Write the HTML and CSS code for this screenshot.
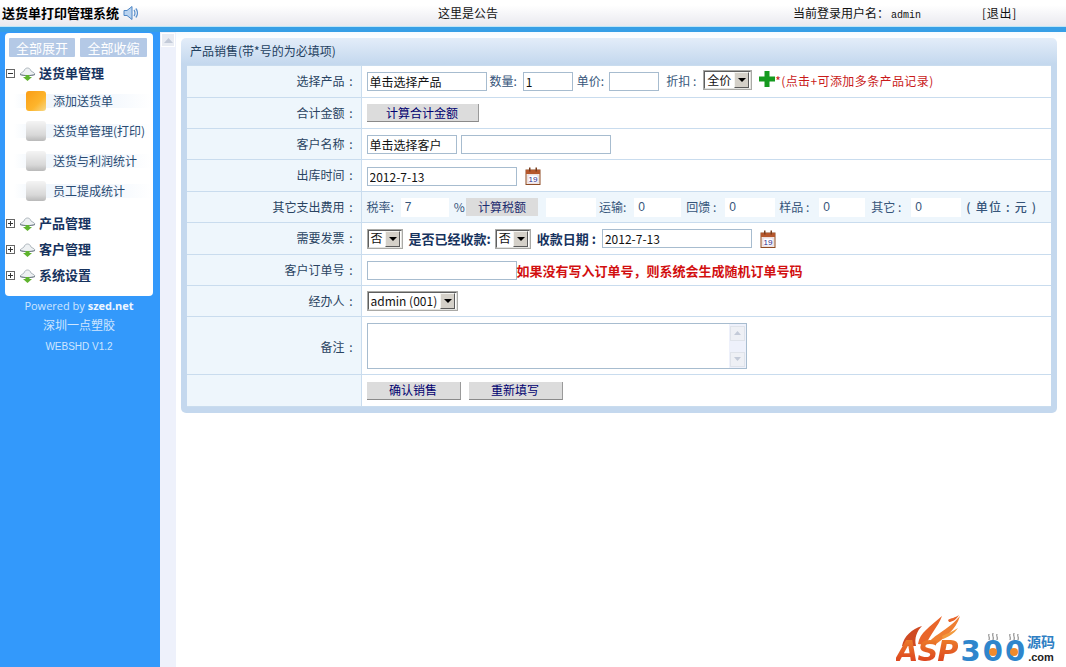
FILE: index.html
```html
<!DOCTYPE html>
<html lang="zh-CN">
<head>
<meta charset="utf-8">
<title>送货单打印管理系统</title>
<link rel="stylesheet" href="styles.css">
</head>
<body>
<svg class="defs" width="0" height="0" aria-hidden="true">
  <defs>
    <symbol id="cloud" viewBox="0 0 17 16">
      <path d="M1 9 C3 7 4 7 5 6 C6 2 11 2 12 6 C13 7 15 7 16 9 C14 11 3 11 1 9Z" fill="#eef1f3" stroke="#9aa4ac" stroke-width=".8"/>
      <path d="M1 9.5 C4 11 13 11 16 9.5" fill="none" stroke="#6d7a84" stroke-width="1"/>
      <path d="M6.5 10H10.500V12H13L8.500 16L4 12H6.500Z" fill="#5fb32e"/>
    </symbol>
    <symbol id="cal" viewBox="0 0 16 18">
      <rect x="1" y="3" width="14" height="14.500" fill="#fbeee0" stroke="#8d4a24"/>
      <rect x="1" y="3" width="14" height="4" fill="#b5562c"/>
      <rect x="4" y="0.500" width="1.500" height="4" fill="#7a3d1c"/>
      <rect x="10.500" y="0.500" width="1.500" height="4" fill="#7a3d1c"/>
      <rect x="3" y="8" width="10" height="8" fill="#fff" stroke="#c6b9d8" stroke-width=".5"/>
      <text x="8" y="15.200" text-anchor="middle" font-size="8" font-family="Liberation Sans, sans-serif" fill="#2a2a8a">19</text>
    </symbol>
  </defs>
</svg>

<header class="topbar">
  <div class="brand">
    <strong>送货单打印管理系统</strong>
    <svg class="speaker" width="15" height="16" viewBox="0 0 15 16">
      <path d="M1 5.500H4L9 1.500V14.500L4 10.500H1Z" fill="#b9d3f0" stroke="#4f86c4"/>
      <path d="M11 5C12.300 6.500 12.300 9.500 11 11M12.800 3.500C15 6 15 10 12.800 12.500" fill="none" stroke="#5a90cc" stroke-width="1.200"/>
    </svg>
  </div>
  <div class="notice">这里是公告</div>
  <div class="user">当前登录用户名：<span class="mono">admin</span></div>
  <div class="logout">[退出]</div>
</header>
<div class="bluebar"></div>

<div class="frame">
  <aside class="side">
    <div class="panel">
      <div class="panel-btns">
        <span class="pbtn">全部展开</span>
        <span class="pbtn">全部收缩</span>
      </div>
      <div class="group first"><i class="tree minus"></i><svg class="cloud"><use href="#cloud"/></svg><b>送货单管理</b></div>
      <ul class="items">
        <li><span class="tile on"></span>添加送货单</li>
        <li><span class="tile"></span>送货单管理(打印)</li>
        <li><span class="tile"></span>送货与利润统计</li>
        <li><span class="tile"></span>员工提成统计</li>
      </ul>
      <div class="group"><i class="tree plus"></i><svg class="cloud"><use href="#cloud"/></svg><b>产品管理</b></div>
      <div class="group"><i class="tree plus"></i><svg class="cloud"><use href="#cloud"/></svg><b>客户管理</b></div>
      <div class="group"><i class="tree plus"></i><svg class="cloud"><use href="#cloud"/></svg><b>系统设置</b></div>
    </div>
    <div class="credits">
      <p class="c1">Powered by <b>szed.net</b></p>
      <p class="c2">深圳一点塑胶</p>
      <p class="c3">WEBSHD V1.2</p>
    </div>
  </aside>

  <div class="gutter"><span class="gutter-up"><svg width="9" height="5" viewBox="0 0 9 5"><path d="M4.500 0L9 5H0Z" fill="#c3cad8"/></svg></span></div>

  <main class="main">
    <section class="card">
      <h1 class="card-title">产品销售(带*号的为必填项)</h1>
      <table class="form">
        <tr class="h32">
          <th>选择产品 :</th>
          <td>
            <input class="ti w120" value="单击选择产品">
            <span class="l ml3">数量:</span>
            <input class="ti w50 ml6" value="1">
            <span class="l ml4">单价:</span>
            <input class="ti w50 ml5">
            <span class="l ml7">折扣 :</span>
            <span class="sel w49 ml7 up"><span>全价</span><i class="arrow"></i></span>
            <svg class="plus-icon" width="16" height="16" viewBox="0 0 16 16"><path d="M5.500 0H10.500V5.500H16V10.500H10.500V16H5.500V10.500H0V5.500H5.500Z" fill="#159a1f"/></svg>
            <span class="req">*(点击+可添加多条产品记录)</span>
          </td>
        </tr>
        <tr class="h31">
          <th>合计金额 :</th>
          <td><button class="btn w112" type="button">计算合计金额</button></td>
        </tr>
        <tr class="h31">
          <th>客户名称 :</th>
          <td><input class="ti w90" value="单击选择客户"><input class="ti w150 ml4"></td>
        </tr>
        <tr class="h32">
          <th>出库时间 :</th>
          <td><input class="ti w150 dn" value="2012-7-13"><svg class="cal ml8"><use href="#cal"/></svg></td>
        </tr>
        <tr class="h31 shade">
          <th>其它支出费用 :</th>
          <td>
            <span class="l">税率:</span>
            <input class="bare w48 ml7" value="7">
            <span class="l ml5">%</span>
            <button class="btn flat w72" type="button">计算税额</button>
            <input class="bare w50 ml8">
            <span class="l ml3">运输:</span>
            <input class="bare w47 ml8" value="0">
            <span class="l ml5">回馈 :</span>
            <input class="bare w50 ml9" value="0">
            <span class="l ml4">样品 :</span>
            <input class="bare w46 ml10" value="0">
            <span class="l ml6">其它 :</span>
            <input class="bare w50 ml10" value="0">
            <span class="l ml5 unit">( 单位 : 元 )</span>
          </td>
        </tr>
        <tr class="h32">
          <th>需要发票 :</th>
          <td>
            <span class="sel w36"><span>否</span><i class="arrow"></i></span>
            <b class="l strong ml6">是否已经收款:</b>
            <span class="sel w36 ml4"><span>否</span><i class="arrow"></i></span>
            <b class="l strong ml6">收款日期 :</b>
            <input class="ti w150 ml6" value="2012-7-13">
            <svg class="cal ml8"><use href="#cal"/></svg>
          </td>
        </tr>
        <tr class="h31">
          <th>客户订单号 :</th>
          <td><input class="ti w150"><b class="warn">如果没有写入订单号，则系统会生成随机订单号码</b></td>
        </tr>
        <tr class="h31">
          <th>经办人 :</th>
          <td><span class="sel w91"><span>admin (001)</span><i class="arrow"></i></span></td>
        </tr>
        <tr class="h58">
          <th class="low">备注 :</th>
          <td>
            <div class="memo">
              <div class="memo-bar">
                <span class="memo-btn"><svg width="7" height="4" viewBox="0 0 7 4"><path d="M3.500 0L7 4H0Z" fill="#c3cad8"/></svg></span>
                <span class="memo-btn"><svg width="7" height="4" viewBox="0 0 7 4"><path d="M3.500 4L7 0H0Z" fill="#c3cad8"/></svg></span>
              </div>
            </div>
          </td>
        </tr>
        <tr class="h32">
          <th></th>
          <td><button class="btn w94" type="button">确认销售</button><button class="btn w94 ml8" type="button">重新填写</button></td>
        </tr>
      </table>
    </section>
  </main>
</div>

<div class="logo">
  <svg class="flame" width="72" height="34" viewBox="0 0 72 34">
    <path d="M6 32C8 22 16 15 26 12C21 17 18 24 20 32Z" fill="#cf4a22"/>
    <path d="M22 30C24 18 34 13 46 2C42 13 34 20 30 31Z" fill="#e9652a"/>
    <path d="M32 30C38 20 50 18 64 2C60 16 48 24 40 30Z" fill="#ef7f32"/>
    <path d="M46 22C52 19 56 18 62 14C58 20 52 23 47 25Z" fill="#f29a3c"/>
    <path d="M52 6C55 4 59 4 63 1C60 6 56 8 53 8Z" fill="#e9652a"/>
  </svg>
  <span class="logo-main"><span class="asp">ASP</span><span class="num">300</span></span>
  <svg class="eggs" width="50" height="32" viewBox="0 0 50 32">
    <g fill="none" stroke="#555" stroke-width=".8">
      <path d="M6 1C5 3 7 4 6 7M10 0C9 3 11 4 10 7M14 1C13 3 15 4 14 7M27 1C26 3 28 4 27 7M31 0C30 3 32 4 31 7M35 1C34 3 36 4 35 7"/>
    </g>
    <circle cx="10" cy="19" r="4" fill="#f08a2c"/>
    <circle cx="31" cy="19" r="4" fill="#f08a2c"/>
  </svg>
  <span class="logo-side"><span class="ym">源码</span><span class="com">.com</span></span>
</div>
</body>
</html>
```
FILE: styles.css
```css
* { box-sizing: border-box; }
html, body { margin: 0; height: 100%; overflow: hidden; background: #fff; }
body {
  display: flex;
  flex-direction: column;
  font: 12px/1.2 "Noto Sans CJK SC", "Liberation Sans", sans-serif;
  color: #1f3a5a;
}
.defs { position: absolute; }
p, h1, ul { margin: 0; padding: 0; }

.topbar {
  flex: none;
  height: 26px;
  display: flex;
  align-items: center;
  padding-left: 2px;
  color: #111;
  background: linear-gradient(#fff 20%, #e9e9ef);
}
.brand { display: flex; align-items: center; width: 436px; }
.brand strong { font-size: 13px; color: #000; }
.speaker { margin-left: 4px; }
.notice { width: 355px; }
.user { width: 189px; }
.mono { font: 10px "Liberation Mono", monospace; margin-left: 2px; }
.logout { letter-spacing: .7px; }
.bluebar {
  flex: none;
  height: 6px;
  border-top: 1px solid #bfe6f7;
  background: #379fe6;
}

.frame { flex: 1; display: flex; min-height: 0; }
.side { flex: none; width: 160px; background: #3399fb; padding: 1px 7px 0 5px; }
.panel {
  width: 148px;
  height: 263px;
  background: #fff;
  border-radius: 4px;
  padding: 5px 0 0 1px;
}
.panel-btns { display: flex; gap: 5px; padding-left: 3px; }
.pbtn {
  height: 19px;
  background: #b4c9e6;
  color: #fff;
  font-size: 13px;
  line-height: 19px;
  text-align: center;
  border-radius: 1px;
}
.pbtn:first-child { width: 66px; }
.pbtn:last-child { width: 67px; }
.group { display: flex; align-items: center; height: 26px; padding-left: 0; color: #17335e; font-size: 13px; }
.group.first { margin-top: 3px; height: 26px; }
.tree {
  position: relative;
  flex: none;
  width: 9px;
  height: 9px;
  border: 1px solid #666;
  background: linear-gradient(#333, #333) center / 5px 1px no-repeat #fff;
}
.tree.plus { background: linear-gradient(#333, #333) center / 5px 1px no-repeat, linear-gradient(#333, #333) center / 1px 5px no-repeat, #fff; }
.cloud { flex: none; width: 17px; height: 16px; margin: 0 3px 0 4px; }
.items { list-style: none; margin: 0 0 4px; }
.items li {
  display: flex;
  align-items: center;
  height: 30px;
  margin-left: 8px;
  padding-left: 12px;
  width: 138px;
  color: #294a72;
  white-space: nowrap;
  background: linear-gradient(90deg, #fff, #f0f6fc 15%, #f4f8fd 70%, #fff) center / 100% 14px no-repeat;
}
.tile {
  flex: none;
  width: 20px;
  height: 20px;
  margin-right: 7px;
  border-radius: 3px;
  background: linear-gradient(#f4f4f4, #d8d8d8 70%, #b9b9b9);
}
.tile.on { background: linear-gradient(135deg, #fa9d16, #fdb52c 60%, #f6d98a); }
.credits { color: #cfe6ff; text-align: center; width: 148px; }
.c1 { padding-top: 2px; line-height: 15px; font-family: "Open Sans", "Liberation Sans", sans-serif; font-size: 11px; }
.c1 b { color: #eef6ff; }
.c2 { padding-top: 4px; line-height: 16px; }
.c3 { padding-top: 7px; font: 10px/13px "Liberation Sans", sans-serif; }

.gutter { flex: none; width: 16px; background: #eef1fb; padding: 1px; }
.gutter-up {
  display: flex;
  align-items: center;
  justify-content: center;
  height: 14px;
  background: #e9ecf3;
  border: 1px solid #fff;
}

.main { flex: 1; min-width: 0; padding: 6px 9px 0 5px; background: linear-gradient(#f6fbff, #fff 8px); }
.card {
  height: 375px;
  padding: 0 6px 7px;
  border-radius: 5px;
  background: linear-gradient(#e3edf9, #c4d8ee 26px);
}
.card-title {
  height: 27px;
  padding: 5px 0 0 3px;
  font-size: 12px;
  font-weight: 400;
  line-height: 15px;
  color: #23405f;
}
.form {
  width: 864px;
  height: 341px;
  table-layout: fixed;
  border-collapse: collapse;
  background: #fff;
}
.form th, .form td { border: 1px solid #c9dcee; border-width: 0 0 1px; padding: 0; white-space: nowrap; }
.form tr:first-child th, .form tr:first-child td { border-top: 1px solid #c9dcee; }
.form th {
  width: 174px;
  padding-right: 8px;
  text-align: right;
  font-weight: 400;
  word-spacing: 2px;
  color: #2a4462;
  background: #eef6fc;
  border-right: 1px solid #c9dcee;
}
.form th.low { padding-top: 3px; }
.form td { padding-left: 5px; font-size: 0; }
.form td > * { font-size: 12px; vertical-align: middle; }
.form td > .strong, .form td > .warn { font-size: 13px; }
.h31 { height: 31px; }
.h32 { height: 32px; }
.h58 { height: 58px; }
.shade td { background: #eef6fc; }
.l { color: #36557a; }
b.l { color: #17335e; }
.ti {
  height: 19px;
  padding: 0 2px;
  border: 1px solid #a7bccf;
  background: #fff;
  font: 12px "Noto Sans CJK SC", "Liberation Sans", sans-serif;
  color: #111;
  outline: none;
}
.bare {
  height: 19px;
  padding: 0 4px;
  border: 0;
  background: #fff;
  font: 12px "Liberation Sans", sans-serif;
  letter-spacing: 1px;
  color: #36557a;
  outline: none;
}
.w36 { width: 36px; } .w46 { width: 46px; } .w47 { width: 47px; } .w48 { width: 48px; }
.w49 { width: 49px; } .w50 { width: 50px; } .w72 { width: 72px; } .w90 { width: 90px; }
.w91 { width: 91px; } .w94 { width: 94px; } .w112 { width: 112px; } .w120 { width: 120px; }
.w150 { width: 150px; }
.ml2 { margin-left: 2px; } .ml3 { margin-left: 3px; } .ml4 { margin-left: 4px; } .ml5 { margin-left: 5px; }
.ml6 { margin-left: 6px; } .ml7 { margin-left: 7px; } .ml8 { margin-left: 8px; } .ml9 { margin-left: 9px; }
.ml10 { margin-left: 10px; }
.up { margin-bottom: 3px; }
.dn { margin-top: 2px; }
.sel {
  display: inline-flex;
  align-items: center;
  justify-content: space-between;
  height: 20px;
  padding: 0 1px 0 2px;
  border: 2px solid;
  border-color: #5f5f5f #e4e4e0 #e4e4e0 #5f5f5f;
  outline: 1px solid #a9a9a6;
  outline-offset: -1px;
  background: #fff;
  color: #111;
  overflow: hidden;
}
.arrow {
  position: relative;
  flex: none;
  width: 15px;
  height: 16px;
  background: #d4d0c8;
  border: 1px solid;
  border-color: #f4f4f0 #5a5a5a #5a5a5a #f4f4f0;
}
.arrow::after {
  content: "";
  position: absolute;
  left: 3px;
  top: 5px;
  border: 4px solid transparent;
  border-top: 4px solid #000;
  border-bottom: 0;
}
.plus-icon { margin: 0 0 6px 7px; }
.req { color: #c91a1a; letter-spacing: .4px; }
.btn {
  height: 18px;
  padding: 0;
  border: 0;
  border-right: 1px solid #9a9a9a;
  border-bottom: 1px solid #8a8a8a;
  background: #dcdcdc;
  color: #000070;
  font: 12px "Noto Sans CJK SC", "Liberation Sans", sans-serif;
  line-height: 16px;
}
.btn.flat { border: 0; margin-left: 1px; color: #1c2d70; }
.cal { width: 16px; height: 18px; }
.warn { color: #d20f0f; }
.unit { letter-spacing: 1.200px; font-weight: 500; }
.memo {
  position: relative;
  width: 380px;
  height: 46px;
  border: 1px solid #a7bccf;
  background: #fff;
}
.memo-bar {
  position: absolute;
  top: 0;
  right: 0;
  width: 17px;
  height: 44px;
  display: flex;
  flex-direction: column;
  justify-content: space-between;
  padding: 2px 1px 1px;
  background: #eef1fb;
}
.memo-btn {
  display: flex;
  align-items: center;
  justify-content: center;
  height: 15px;
  background: #eef0f5;
  border: 1px solid #dfe3ea;
}

.logo { position: absolute; left: 896px; top: 614px; width: 164px; height: 52px; }
.flame { position: absolute; left: 0; top: 0; }
.logo-main {
  position: absolute;
  left: 0;
  top: 22px;
  font: 700 29px/30px "DejaVu Sans", sans-serif;
  letter-spacing: -1px;
  white-space: nowrap;
}
.asp {
  background: linear-gradient(#f08a2c, #d8351c);
  -webkit-background-clip: text;
  background-clip: text;
  color: transparent;
  font-style: oblique;
}
.num { color: #2f86cc; letter-spacing: 2px; margin-left: 3px; }
.eggs { position: absolute; left: 87px; top: 19px; }
.logo-side { position: absolute; left: 131px; top: 19px; display: flex; flex-direction: column; align-items: center; }
.ym { color: #2f7fc4; font-size: 14px; font-weight: 700; line-height: 16px; }
.com { color: #222; font: 700 11px/12px "Liberation Sans", sans-serif; margin-top: 2px; }
```
